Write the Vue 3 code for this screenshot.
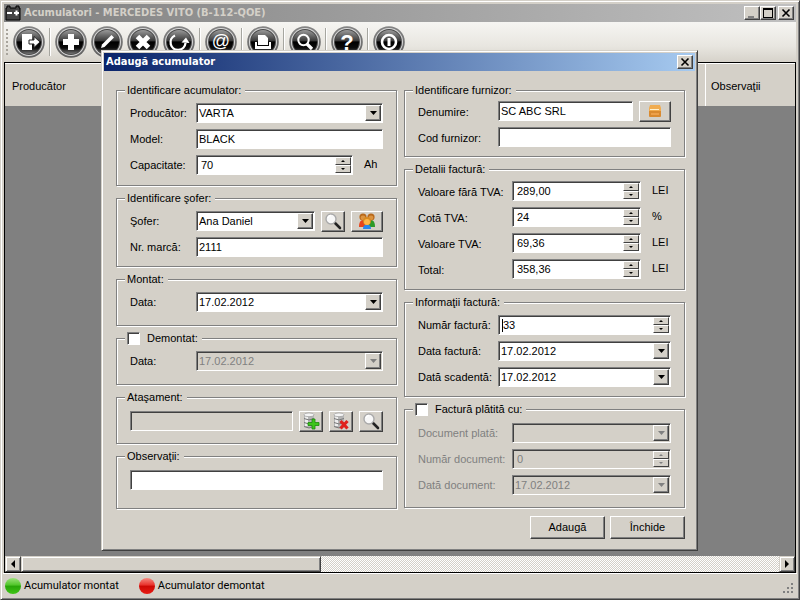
<script setup>
import { reactive } from 'vue'

const tools = [
  { icon: 'exit', label: 'Ieşire' },
  { sep: true },
  { icon: 'add', label: 'Adaugă' },
  { icon: 'edit', label: 'Modifică' },
  { icon: 'remove', label: 'Şterge' },
  { icon: 'refresh', label: 'Reîncarcă' },
  { sep: true },
  { icon: 'mail', label: 'E-mail' },
  { sep: true },
  { icon: 'print', label: 'Tipăreşte' },
  { sep: true },
  { icon: 'find', label: 'Caută' },
  { sep: true },
  { icon: 'help', label: 'Ajutor' },
  { sep: true },
  { icon: 'about', label: 'Despre' }
]

const columns = reactive([
  [
    {
      title: 'Identificare acumulator:',
      size: 'g-a',
      rows: [
        { id: 'producator', label: 'Producător:', kind: 'select', value: 'VARTA' },
        { id: 'model', label: 'Model:', kind: 'text', value: 'BLACK' },
        { id: 'capacitate', label: 'Capacitate:', kind: 'spin', value: '70', unit: 'Ah' }
      ]
    },
    {
      title: 'Identificare şofer:',
      size: 'g-b',
      rows: [
        {
          id: 'sofer', label: 'Şofer:', kind: 'select', value: 'Ana Daniel',
          actions: [{ icon: 'lens', label: 'Caută şofer' }, { icon: 'people', label: 'Listă şoferi', wide: true }]
        },
        { id: 'marca', label: 'Nr. marcă:', kind: 'text', value: '2111' }
      ]
    },
    { title: 'Montat:', size: 'g-c', rows: [{ id: 'data-montat', label: 'Data:', kind: 'date', value: '17.02.2012' }] },
    {
      title: 'Demontat:', size: 'g-c', check: 'demontat', checked: false,
      rows: [{ id: 'data-demontat', label: 'Data:', kind: 'date', value: '17.02.2012', off: true }]
    },
    {
      title: 'Ataşament:', size: 'g-d',
      rows: [
        {
          id: 'atasament', kind: 'text', value: '', off: true, name: 'Ataşament',
          actions: [
            { icon: 'dbadd', label: 'Adaugă ataşament' },
            { icon: 'dbdel', label: 'Şterge ataşament' },
            { icon: 'lens', label: 'Vezi ataşament' }
          ]
        }
      ]
    },
    { title: 'Observaţii:', size: 'g-e', rows: [{ id: 'observatii', kind: 'text', value: '', name: 'Observaţii' }] }
  ],
  [
    {
      title: 'Identificare furnizor:', size: 'g-f', low: true,
      rows: [
        {
          id: 'denumire', label: 'Denumire:', kind: 'text', value: 'SC ABC SRL',
          actions: [{ icon: 'box', label: 'Alege furnizor', wide: true }]
        },
        { id: 'cod', label: 'Cod furnizor:', kind: 'text', value: '' }
      ]
    },
    {
      title: 'Detalii factură:', size: 'g-g', low: true, wideLabel: true,
      rows: [
        { id: 'fara-tva', label: 'Valoare fără TVA:', kind: 'spin', value: '289,00', unit: 'LEI' },
        { id: 'cota', label: 'Cotă TVA:', kind: 'spin', value: '24', unit: '%' },
        { id: 'tva', label: 'Valoare TVA:', kind: 'spin', value: '69,36', unit: 'LEI' },
        { id: 'total', label: 'Total:', kind: 'spin', value: '358,36', unit: 'LEI' }
      ]
    },
    {
      title: 'Informaţii factură:', size: 'g-h',
      rows: [
        { id: 'numar', label: 'Număr factură:', kind: 'spin', value: '33', caret: true },
        { id: 'data-factura', label: 'Data factură:', kind: 'date', value: '17.02.2012' },
        { id: 'scadenta', label: 'Dată scadentă:', kind: 'date', value: '17.02.2012' }
      ]
    },
    {
      title: 'Factură plătită cu:', size: 'g-i', wideLabel: true, check: 'platita', checked: false, dim: true,
      rows: [
        { id: 'doc-plata', label: 'Document plată:', kind: 'select', value: '', off: true },
        { id: 'nr-doc', label: 'Număr document:', kind: 'spin', value: '0', off: true },
        { id: 'data-doc', label: 'Dată document:', kind: 'date', value: '17.02.2012', off: true }
      ]
    }
  ]
])

function step(row, delta) {
  const decimals = (row.value.split(',')[1] || '').length
  const next = Math.max(0, parseFloat(row.value.replace(',', '.')) + delta)
  row.value = next.toFixed(decimals).replace('.', ',')
}
</script>

<template>
  <div class="window">
    <header class="titlebar">
      <svg class="battery" viewBox="0 0 16 16" aria-hidden="true">
        <path d="M1 3h1V1h3v2h6V1h3v2h1v12H1z" fill="#444" stroke="#000" />
        <path d="M2 7h5v2H2zM9 7h5v2H9zM10.500 5.500h2v5h-2z" fill="#fff" />
      </svg>
      <h1 class="caption">Acumulatori - MERCEDES VITO (B-112-QOE)</h1>
      <button class="sysbtn" type="button" aria-label="Minimizează">
        <svg viewBox="0 0 12 10"><path d="M2 8h6v2H2z" fill="#808080" /></svg>
      </button>
      <button class="sysbtn" type="button" aria-label="Maximizează">
        <svg viewBox="0 0 12 10"><path d="M1 0h10v10H1zM2 2v7h8V2z" fill="#000" fill-rule="evenodd" /></svg>
      </button>
      <button class="sysbtn apart" type="button" aria-label="Închide fereastra">
        <svg viewBox="0 0 12 10"><path d="M2.500 1.500l7 7M9.500 1.500l-7 7" stroke="#000" stroke-width="1.600" /></svg>
      </button>
    </header>

    <nav class="toolbar" aria-label="Comenzi">
      <span class="grip"></span>
      <template v-for="(t, i) in tools" :key="i">
        <span v-if="t.sep" class="sep"></span>
        <button v-else class="tool" type="button" :aria-label="t.label">
          <svg viewBox="0 0 32 32">
            <defs>
              <linearGradient :id="'ring' + i" x1="0" y1="0" x2="0" y2="1">
                <stop offset="0" stop-color="#858585" />
                <stop offset="1" stop-color="#606060" />
              </linearGradient>
              <linearGradient :id="'disc' + i" x1="0" y1="0" x2="0" y2="1">
                <stop offset="0" stop-color="#9a9a9a" />
                <stop offset=".44" stop-color="#3c3c3c" />
                <stop offset=".5" stop-color="#000" />
                <stop offset=".75" stop-color="#0c0c0c" />
                <stop offset="1" stop-color="#777" />
              </linearGradient>
            </defs>
            <circle cx="16" cy="16" r="15.800" :fill="'url(#ring' + i + ')'" />
            <circle cx="16" cy="16" r="14" fill="#d8d8d8" />
            <circle cx="16" cy="16" r="13" fill="#4a4a4a" />
            <circle cx="16" cy="16" r="12" :fill="'url(#disc' + i + ')'" />
            <g v-if="t.icon === 'exit'" fill="#fff">
              <path d="M9 8h10v16H9z" />
              <path d="M16 14h5v-3.500l6 5.500-6 5.500V18h-5z" stroke="#222" stroke-width="1" />
            </g>
            <path v-else-if="t.icon === 'add'" d="M13 8h6v5h5v6h-5v5h-6v-5H8v-6h5z" fill="#fff" />
            <path v-else-if="t.icon === 'edit'" d="M10 22l1-3.500L20.500 9l2.500 2.500-9.500 9.500z" fill="#fff" />
            <path v-else-if="t.icon === 'remove'" d="M10.500 10.500l11 11M21.500 10.500l-11 11" stroke="#fff" stroke-width="5" />
            <g v-else-if="t.icon === 'refresh'">
              <path d="M12 9.500A7.500 7.500 0 1 0 22.500 17" fill="none" stroke="#fff" stroke-width="2.300" />
              <path d="M18.500 16.500l4.500-5 3.500 5.500z" fill="#fff" />
            </g>
            <text v-else-if="t.icon === 'mail'" x="16" y="21" class="glyph at">@</text>
            <g v-else-if="t.icon === 'print'" fill="#fff">
              <path d="M11 9h7l3 3v7H11z" />
              <path d="M8 16h2v4h12v-4h2v7H8z" />
            </g>
            <g v-else-if="t.icon === 'find'" fill="none" stroke="#fff">
              <circle cx="14.500" cy="14" r="5.200" stroke-width="2" />
              <path d="M18 18l5 5" stroke-width="3.200" />
            </g>
            <text v-else-if="t.icon === 'help'" x="16" y="24" class="glyph ask">?</text>
            <g v-else fill="none" stroke="#fff">
              <circle cx="16" cy="16" r="7" stroke-width="2.600" />
              <path d="M16 12v8" stroke-width="3" />
            </g>
          </svg>
        </button>
      </template>
    </nav>

    <main class="list">
      <table class="grid">
        <thead>
          <tr>
            <th>Producător</th>
            <th class="notes">Observaţii</th>
          </tr>
        </thead>
      </table>
      <div class="scroll">
        <button class="scrollbtn" type="button" aria-label="Derulează la stânga">
          <svg viewBox="0 0 8 8"><path d="M6 0v8L2 4z" /></svg>
        </button>
        <span class="thumb"></span>
        <span class="track"></span>
        <button class="scrollbtn" type="button" aria-label="Derulează la dreapta">
          <svg viewBox="0 0 8 8"><path d="M2 0v8l4-4z" /></svg>
        </button>
      </div>
    </main>

    <footer class="status">
      <span class="legend-item"><i class="dot green"></i>Acumulator montat</span>
      <span class="legend-item"><i class="dot red"></i>Acumulator demontat</span>
      <svg class="sizer" viewBox="0 0 12 12" aria-hidden="true">
        <path d="M8 0h2v2H8zM4 4h2v2H4zM8 4h2v2H8zM0 8h2v2H0zM4 8h2v2H4zM8 8h2v2H8z" fill="#808080" />
      </svg>
    </footer>

    <div class="overlay">
      <form class="dialog" role="dialog" aria-labelledby="dlg-title" @submit.prevent>
        <header class="titlebar active">
          <h2 id="dlg-title" class="caption">Adaugă acumulator</h2>
          <button class="sysbtn" type="button" aria-label="Închide dialogul">
            <svg viewBox="0 0 12 10"><path d="M2.500 1.500l7 7M9.500 1.500l-7 7" stroke="#000" stroke-width="1.600" /></svg>
          </button>
        </header>

        <div class="body">
          <div class="cols">
            <div v-for="(col, c) in columns" :key="c" class="col" :class="{ second: c === 1 }">
              <fieldset
                v-for="g in col" :key="g.title" class="group"
                :class="[g.size, { low: g.low, 'wide-label': g.wideLabel, dim: g.dim }]"
              >
                <legend>
                  <label v-if="g.check" class="check" :for="g.check">
                    <input :id="g.check" v-model="g.checked" type="checkbox">{{ g.title }}
                  </label>
                  <template v-else>{{ g.title }}</template>
                </legend>
                <div v-for="r in g.rows" :key="r.id" class="row">
                  <label v-if="r.label" class="name" :for="r.id">{{ r.label }}</label>

                  <span class="field" :class="[r.kind, { off: r.off }]">
                    <select v-if="r.kind === 'select'" :id="r.id" v-model="r.value" :disabled="r.off">
                      <option>{{ r.value }}</option>
                    </select>
                    <input v-else :id="r.id" v-model="r.value" type="text" :disabled="r.off" :aria-label="r.name">
                    <span v-if="r.kind === 'select'" class="drop over" aria-hidden="true">
                      <svg viewBox="0 0 7 4"><path d="M0 0h7L3.500 4z" /></svg>
                    </span>
                    <button v-if="r.kind === 'date'" class="drop" type="button" :disabled="r.off" aria-label="Alege data">
                      <svg viewBox="0 0 7 4"><path d="M0 0h7L3.500 4z" /></svg>
                    </button>
                    <span v-if="r.kind === 'spin'" class="spinner">
                      <button type="button" :disabled="r.off" aria-label="Mai mult" @click="step(r, 1)">
                        <svg viewBox="0 0 4 2"><path d="M0 2h4L2 0z" /></svg>
                      </button>
                      <button type="button" :disabled="r.off" aria-label="Mai puţin" @click="step(r, -1)">
                        <svg viewBox="0 0 4 2"><path d="M0 0h4L2 2z" /></svg>
                      </button>
                    </span>
                    <i v-if="r.caret" class="caret"></i>
                  </span>

                  <span v-if="r.unit" class="unit">{{ r.unit }}</span>

                  <button
                    v-for="a in r.actions" :key="a.icon" class="action" :class="{ wide: a.wide }"
                    type="button" :aria-label="a.label"
                  >
                    <svg viewBox="0 0 18 18">
                      <g v-if="a.icon === 'lens'">
                        <path d="M11 11l5 5" stroke="#222" stroke-width="2.600" stroke-linecap="round" />
                        <circle cx="7" cy="7" r="5" fill="#f8f8f8" stroke="#aaa" stroke-width="1.400" />
                        <path d="M4 6a3 3 0 0 1 3-2.500" stroke="#fff" stroke-width="1.500" fill="none" />
                      </g>
                      <g v-else-if="a.icon === 'people'">
                        <path d="M1 15q0-7 4-7t4 7z" fill="#e8431c" />
                        <path d="M9 15q0-7 4-7t4 7z" fill="#2c9a28" />
                        <circle cx="5" cy="5" r="3.600" fill="#b8691c" />
                        <circle cx="13" cy="5" r="3.600" fill="#b8691c" />
                        <circle cx="5" cy="5.800" r="2.400" fill="#dc9440" />
                        <circle cx="13" cy="5.800" r="2.400" fill="#dc9440" />
                        <path d="M5 17q0-4.500 4-4.500t4 4.500z" fill="#2a86ea" />
                        <circle cx="9" cy="9" r="4" fill="#d88a20" />
                        <circle cx="9" cy="10" r="3" fill="#ffb648" />
                      </g>
                      <g v-else-if="a.icon === 'box'">
                        <path d="M4 3h10l1 3H3z" fill="#f0ac50" />
                        <path d="M3 6h12v8q0 1-1 1H4q-1 0-1-1z" fill="#d98a30" />
                        <path d="M3 6h12v3H3z" fill="#f2ac4e" />
                        <path d="M4 7h9v1H4z" fill="#fff0cc" />
                        <path d="M5 11h8v2H5z" fill="#eda04a" />
                      </g>
                      <g v-else>
                        <path d="M2 2.500v12q5 3 10 0v-12z" fill="#b5b5b5" />
                        <path d="M3 3v11h3V4z" fill="#ededed" />
                        <ellipse cx="7" cy="2.800" rx="5" ry="1.900" fill="#f4f4f4" stroke="#999" stroke-width=".7" />
                        <path d="M2 6.500q5 3 10 0M2 10.500q5 3 10 0M2 14.500q5 3 10 0" fill="none" stroke="#777" />
                        <path
                          v-if="a.icon === 'dbadd'" d="M10 7h3v3.500h4v3h-4V17h-3v-3.500H6v-3h4z"
                          fill="#3fc41c" stroke="#1d8a0c" stroke-width=".8"
                        />
                        <path v-else d="M8.500 9l7 7.500M15.500 9l-7 7.500" stroke="#e0211c" stroke-width="3.200" />
                      </g>
                    </svg>
                  </button>
                </div>
              </fieldset>
            </div>
          </div>

          <div class="buttons">
            <button class="cmd" type="submit">Adaugă</button>
            <button class="cmd" type="button">Închide</button>
          </div>
        </div>
      </form>
    </div>
  </div>
</template>

<style>
body {
  margin: 0;
  background: #d4d0c8;
}
</style>

<style scoped>
.window,
.window * {
  box-sizing: border-box;
}

.window {
  position: relative;
  display: flex;
  flex-direction: column;
  min-height: 100vh;
  padding: 2px;
  border: 1px solid;
  border-color: #d4d0c8 #404040 #404040 #d4d0c8;
  box-shadow: inset 1px 1px 0 #fff, inset -1px -1px 0 #808080;
  background: #d4d0c8;
  color: #000;
  font: 11px/13px "Liberation Sans", Arial, sans-serif;
}

button,
input,
select {
  margin: 0;
  padding: 0;
  border: 0;
  border-radius: 0;
  font: inherit;
  color: inherit;
}

svg {
  display: block;
}

.titlebar {
  display: flex;
  align-items: center;
  height: 18px;
  margin: 1px 1px 0;
  padding: 0 2px 0 1px;
  background: linear-gradient(90deg, #808080, #c0c0c0);
  color: #d4d0c8;
}

.titlebar.active {
  margin: 0;
  background: linear-gradient(90deg, #0a246a, #a6caf0);
  color: #fff;
}

.battery {
  width: 16px;
  height: 16px;
  margin-right: 1px;
}

.caption {
  flex: 1;
  margin: 0;
  padding-left: 2px;
  font: bold 11px/14px "DejaVu Sans Condensed", "Open Sans", sans-serif;
  white-space: nowrap;
}

.active .caption {
  padding-left: 1px;
}

.sysbtn {
  display: grid;
  place-items: center;
  width: 16px;
  height: 14px;
  border: 1px solid;
  border-color: #fff #404040 #404040 #fff;
  box-shadow: inset -1px -1px 0 #808080;
  background: #d4d0c8;
}

.sysbtn svg {
  width: 12px;
  height: 10px;
}

.sysbtn.apart {
  margin-left: 2px;
}

.toolbar {
  display: flex;
  align-items: center;
  gap: 4px;
  height: 40px;
  margin: 0 1px;
  padding: 0 2px;
  background: linear-gradient(#f6f5f2, #e8e6e0 60%, #d6d2ca);
}

.grip {
  width: 3px;
  height: 26px;
  background: repeating-linear-gradient(#a8a49c 0 2px, transparent 2px 4px);
  background-size: 2px 100%;
  background-repeat: no-repeat;
}

.tool {
  width: 32px;
  height: 32px;
  background: none;
}

.sep {
  width: 2px;
  height: 28px;
  border-left: 1px solid #a6a6a0;
  border-right: 1px solid #fff;
}

.glyph {
  fill: #fff;
  font-family: "Liberation Sans", Arial, sans-serif;
  text-anchor: middle;
}

.at {
  font-size: 18px;
}

.ask {
  font-size: 22px;
  font-weight: bold;
}

.list {
  flex: 1;
  display: flex;
  flex-direction: column;
  justify-content: space-between;
  margin: 0 1px;
  border: 1px solid #000;
  background: #808080;
}

.grid {
  width: 100%;
  border-collapse: separate;
  border-spacing: 0;
  table-layout: fixed;
}

.grid th {
  height: 43px;
  padding: 2px 7px 0;
  border-top: 1px solid #fff;
  background: #d4d0c8;
  font-weight: normal;
  text-align: left;
}

.grid .notes {
  width: 90px;
  padding-left: 5px;
  border-left: 1px solid #fff;
}

.scroll {
  display: flex;
  height: 16px;
}

.scrollbtn,
.thumb {
  border: 1px solid;
  border-color: #d4d0c8 #404040 #404040 #d4d0c8;
  box-shadow: inset 1px 1px 0 #fff, inset -1px -1px 0 #808080;
  background: #d4d0c8;
}

.scrollbtn {
  display: grid;
  place-items: center;
  width: 16px;
}

.scrollbtn svg {
  width: 8px;
  height: 8px;
}

.thumb {
  flex: 0 0 38%;
}

.track {
  flex: 1;
  background: repeating-conic-gradient(#fff 0 25%, #d4d0c8 0 50%) 0 0 / 2px 2px;
}

.status {
  display: flex;
  align-items: center;
  gap: 20px;
  height: 24px;
  padding: 0 2px;
  border-top: 1px solid #fff;
  font: 11px/14px Roboto, "Open Sans", sans-serif;
}

.legend-item {
  display: flex;
  align-items: center;
  gap: 3px;
}

.dot {
  width: 16px;
  height: 16px;
  border-radius: 50%;
}

.green {
  background: linear-gradient(#9be27a, #4fc528 45%, #28a408 50%, #3fc416);
}

.red {
  background: linear-gradient(#f58a80, #e8302a 45%, #cc0804 50%, #e81c14);
}

.sizer {
  width: 12px;
  height: 12px;
  margin: 6px 0 0 auto;
}

.overlay {
  position: absolute;
  inset: 0;
  display: grid;
  place-items: center;
  padding: 0 1px 0 0;
}

.dialog {
  width: 597px;
  max-width: 100%;
  padding: 2px;
  border: 1px solid;
  border-color: #d4d0c8 #404040 #404040 #d4d0c8;
  box-shadow: inset 1px 1px 0 #fff, inset -1px -1px 0 #808080;
  background: #d4d0c8;
}

.body {
  padding: 13px 10px 9px 12px;
}

.cols {
  display: flex;
  gap: 7px;
}

.col {
  flex: 1;
  min-width: 0;
  display: flex;
  flex-direction: column;
  gap: 6px;
}

.group {
  display: flex;
  flex-direction: column;
  gap: 5px;
  min-width: 0;
  margin: 0;
  padding: 6px 13px 8px;
  border: 1px solid #808080;
  box-shadow: 1px 1px 0 #fff, inset 1px 1px 0 #fff;
}

.g-a { padding-bottom: 9px; }
.g-c { padding-bottom: 12px; }
.g-d { padding-top: 7px; padding-bottom: 11px; }
.g-e { padding-top: 7px; padding-bottom: 17px; }
.g-f { padding-top: 4px; }
.g-g { padding-top: 5px; padding-bottom: 9px; }
.g-i { padding-top: 7px; padding-bottom: 11px; }

legend {
  height: 13px;
  margin-left: -5px;
  padding: 0 4px 0 2px;
  background: #d4d0c8;
}

.check {
  display: flex;
  align-items: center;
  gap: 7px;
}

.check input {
  appearance: none;
  width: 13px;
  height: 13px;
  border: 1px solid;
  border-color: #808080 #fff #fff #808080;
  box-shadow: inset 1px 1px 0 #404040;
  background: #fff;
}

.check input:checked {
  background: radial-gradient(#000 40%, #fff 45%);
}

.row {
  display: flex;
  align-items: center;
  gap: 6px;
  height: 21px;
}

.name {
  flex: 0 0 66px;
  margin-right: -6px;
  white-space: nowrap;
}

.second .name {
  flex-basis: 80px;
}

.second .wide-label .name {
  flex-basis: 94px;
}

.low .name {
  padding-top: 3px;
}

.dim .name {
  color: #808080;
}

.field {
  position: relative;
  flex: 1;
  display: flex;
  min-width: 0;
  height: 20px;
  padding: 1px;
  border: 1px solid;
  border-color: #808080 #fff #fff #808080;
  box-shadow: inset 1px 1px 0 #404040;
  background: #fff;
}

.field input,
.field select {
  appearance: none;
  flex: 1;
  width: 100%;
  min-width: 0;
  padding: 0 1px;
  background: transparent;
  outline: none;
}

.spin input {
  padding-left: 3px;
}

.off {
  background: #d4d0c8;
  color: #808080;
}

.off input,
.off select {
  color: #808080;
  opacity: 1;
}

.drop {
  display: grid;
  place-items: center;
  flex: 0 0 16px;
  border: 1px solid;
  border-color: #fff #404040 #404040 #fff;
  box-shadow: inset -1px -1px 0 #808080;
  background: #d4d0c8;
}

.over {
  pointer-events: none;
}

.select select {
  margin-right: -16px;
  padding-right: 16px;
}

.drop svg {
  width: 7px;
  height: 4px;
}

.off svg {
  fill: #808080;
}

.spinner {
  display: flex;
  flex-direction: column;
  flex: 0 0 16px;
}

.spinner button {
  flex: 1;
  display: grid;
  place-items: center;
  min-height: 0;
  border: 1px solid;
  border-color: #fff #404040 #404040 #fff;
  background: #d4d0c8;
}

.spinner svg {
  width: 4px;
  height: 2px;
}

.caret {
  position: absolute;
  left: 3px;
  top: 3px;
  width: 1px;
  height: 13px;
  background: #000;
}

.unit {
  flex: 0 0 19px;
  margin-left: 5px;
  padding-bottom: 1px;
}

.action {
  display: grid;
  place-items: center;
  flex: 0 0 24px;
  height: 21px;
  border: 1px solid;
  border-color: #fff #404040 #404040 #fff;
  box-shadow: inset -1px -1px 0 #808080;
  background: #d4d0c8;
}

.action.wide {
  flex-basis: 32px;
}

.action svg {
  width: 18px;
  height: 18px;
}

.buttons {
  display: flex;
  justify-content: flex-end;
  gap: 5px;
  padding-top: 7px;
}

.cmd {
  width: 75px;
  height: 23px;
  border: 1px solid;
  border-color: #fff #404040 #404040 #fff;
  box-shadow: inset -1px -1px 0 #808080;
  background: #d4d0c8;
}
</style>
